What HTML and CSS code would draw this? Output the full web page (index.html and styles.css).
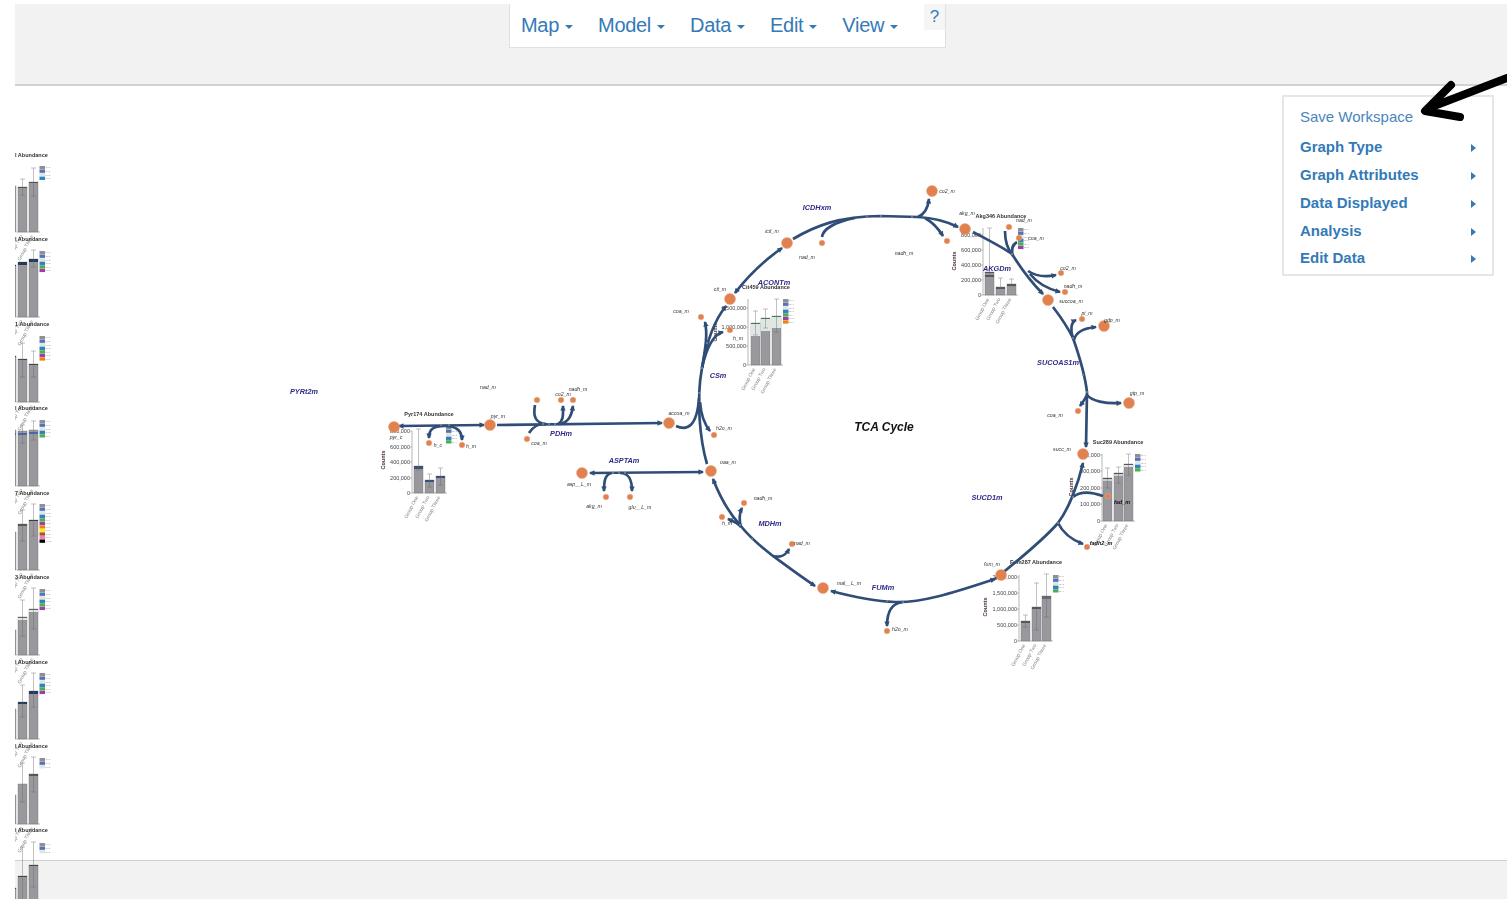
FILE: index.html
```html
<!DOCTYPE html>
<html lang="en">
<head>
    <meta charset="UTF-8">
    <title>TCA Cycle - Metabolic Map</title>
    <link rel="stylesheet" href="styles.css">
</head>
<body>
    <header class="topbar">
        <nav class="menu">
            <a class="menu-item">Map<span class="caret"></span></a>
            <a class="menu-item">Model<span class="caret"></span></a>
            <a class="menu-item">Data<span class="caret"></span></a>
            <a class="menu-item">Edit<span class="caret"></span></a>
            <a class="menu-item">View<span class="caret"></span></a>
            <a class="help">?</a>
        </nav>
    </header>

    <main class="stage">
        <ul class="side-panel">
            <li class="side-link">Save Workspace</li>
            <li class="side-item">Graph Type<span class="caret-right"></span></li>
            <li class="side-item">Graph Attributes<span class="caret-right"></span></li>
            <li class="side-item">Data Displayed<span class="caret-right"></span></li>
            <li class="side-item">Analysis<span class="caret-right"></span></li>
            <li class="side-item">Edit Data<span class="caret-right"></span></li>
        </ul>
    </main>

    <footer class="bottombar"></footer>

    <!-- The map is a free canvas, it runs over the header and footer -->
    <svg id="map" class="map" width="1507" height="899" viewBox="0 0 1507 899">
        <defs>
            <marker id="head" markerUnits="userSpaceOnUse" markerWidth="9" markerHeight="9" refX="6" refY="4.5" orient="auto">
                <path class="head" d="M1.5 1.8 L7 4.5 L1.5 7.2 Z"/>
            </marker>
            <marker id="headStart" markerUnits="userSpaceOnUse" markerWidth="9" markerHeight="9" refX="3" refY="4.5" orient="auto">
                <path class="head" d="M7.5 1.8 L2 4.5 L7.5 7.2 Z"/>
            </marker>
            <clipPath id="leftEdge"><rect x="15" y="0" width="100" height="899"/></clipPath>
        </defs>
        <g id="charts"></g>
        <g id="edges"></g>
        <g id="nodes"></g>
        <g id="labels"></g>
        <!-- Hand drawn arrow pointing at Save Workspace -->
        <path class="pointer" d="M1507 78 L1429 108 M1451 85 L1425 111 L1460 117"/>
    </svg>

    <script src="diagram.js"></script>
</body>
</html>
```

FILE: styles.css
```css
html, body {
    margin: 0;
    padding: 0;
}
body {
    position: relative;
    display: flex;
    flex-direction: column;
    box-sizing: border-box;
    width: 1507px;
    height: 899px;
    padding: 4px 0 0 15px;
    overflow: hidden;
    font-family: "Liberation Sans", Arial, sans-serif;
    background-color: #fff;
}
.topbar {
    height: 80px;
    flex: none;
    background-color: #f2f2f2;
    border-bottom: 2px solid #d2d2d2;
}
.menu {
    display: flex;
    box-sizing: border-box;
    width: 437px;
    height: 44px;
    margin-left: 494px;
    padding-left: 11px;
    background-color: #fff;
    border: 1px solid #e0e0e0;
    border-top: none;
}
.menu-item {
    display: flex;
    align-items: center;
    margin-right: 25px;
    font-size: 20px;
    letter-spacing: -0.3px;
    color: #337ab7;
}
.caret {
    margin-left: 6px;
    margin-top: 3px;
    border-top: 4px solid #337ab7;
    border-left: 4px solid transparent;
    border-right: 4px solid transparent;
}
.help {
    align-self: flex-start;
    margin-left: auto;
    width: 21px;
    height: 26px;
    font-size: 17px;
    line-height: 26px;
    text-align: center;
    color: #337ab7;
    background-color: #f5f5f5;
}
.stage {
    flex: 1;
    display: flex;
    justify-content: flex-end;
    align-items: flex-start;
    padding: 9px 13px 0 0;
}
.side-panel {
    box-sizing: border-box;
    width: 212px;
    height: 181px;
    margin: 0;
    padding: 5px 0 0 16px;
    list-style: none;
    background-color: #fff;
    border: 2px solid #e6e6e6;
}
.side-link, .side-item {
    display: flex;
    align-items: center;
    color: #337ab7;
}
.side-link {
    height: 28px;
    margin-bottom: 3px;
    font-size: 15px;
    color: #4a86bd;
}
.side-item {
    height: 27.75px;
    font-size: 15px;
    font-weight: bold;
}
.caret-right {
    margin-left: auto;
    margin-right: 16px;
    margin-top: 3px;
    border-left: 5px solid #337ab7;
    border-top: 4.5px solid transparent;
    border-bottom: 4.5px solid transparent;
}
.bottombar {
    height: 38px;
    flex: none;
    background-color: #f2f2f2;
    border-top: 1px solid #cfcfcf;
}
.map {
    position: absolute;
    top: 0;
    left: 0;
    pointer-events: none;
    filter: blur(0.3px);
}
.map text {
    font-family: "Liberation Sans", Arial, sans-serif;
}
.edge {
    fill: none;
    stroke: #2f4d76;
    stroke-width: 2.7;
}
.head {
    fill: #2f4d76;
}
.node {
    fill: #e0814f;
    stroke: #e9a27c;
    stroke-width: 0.5;
}
.joint {
    fill: #7f8a99;
}
.metabolite {
    font-size: 5.2px;
    font-style: italic;
    text-anchor: middle;
    fill: #333;
}
.metabolite-dark {
    font-size: 5.5px;
    font-style: italic;
    font-weight: bold;
    text-anchor: middle;
    fill: #111;
}
.reaction {
    font-size: 7.3px;
    font-style: italic;
    font-weight: bold;
    text-anchor: middle;
    fill: #2e2a86;
}
.map-title {
    font-size: 12px;
    font-style: italic;
    font-weight: bold;
    text-anchor: middle;
    fill: #111;
}
.pointer {
    fill: none;
    stroke: #000;
    stroke-width: 8;
    stroke-linecap: round;
    stroke-linejoin: round;
}
.chart-title {
    font-size: 5.5px;
    font-weight: bold;
    text-anchor: middle;
    fill: #333;
}
.chart-title-left {
    font-size: 5.5px;
    font-weight: bold;
    fill: #333;
}
.tick-label {
    font-size: 5.5px;
    text-anchor: end;
    fill: #444;
}
.counts {
    font-size: 5.5px;
    font-weight: bold;
    text-anchor: middle;
    fill: #4a3040;
}
.group-label {
    font-size: 5px;
    text-anchor: end;
    fill: #888;
}
.legend-label {
    font-size: 2.5px;
    fill: #888;
}
.axis {
    fill: none;
    stroke: #888;
    stroke-width: 0.6;
}
.bar {
    fill: #99989d;
    stroke: #77767b;
    stroke-width: 0.4;
}
.whisker {
    fill: none;
    stroke: #666;
    stroke-opacity: 0.5;
    stroke-width: 0.8;
}
```

FILE: diagram.js
```js
const NS = 'http://www.w3.org/2000/svg';

function add(parent, tag, attrs, text) {
    const el = document.createElementNS(NS, tag);
    for (const key in attrs) {
        el.setAttribute(key, attrs[key]);
    }
    if (text !== undefined) {
        el.textContent = text;
    }
    parent.appendChild(el);
    return el;
}

// path, arrow at end, arrow at start
const edges = [
    // PYRt2m
    ['M399 426 L484 425', 1, 1],
    ['M445 426 C432 426 429 430 429 438', 1],
    ['M445 426 C458 426 462 432 462 440', 1],
    // PDHm
    ['M497 425 L662 423', 1],
    ['M535 405 C533 416 535 423 546 424', 0],
    ['M529 433 C532 428 536 424 546 424', 0],
    ['M558 424 C564 421 563 413 563 406', 1],
    ['M560 424 C570 422 572 413 573 406', 1],
    // CSm
    ['M676 426 C687 431 697 427 699 398', 0],
    ['M707 464 C700 440 696 400 702 368 C706 345 713 322 726 306', 1],
    ['M702 368 C705 350 708 335 705 322', 1],
    ['M702 368 C706 350 712 335 723 332', 1],
    ['M700 402 C701 415 705 425 710 431', 1],
    // ACONTm
    ['M782 248 C765 260 748 276 735 293', 1, 1],
    // ICDHxm
    ['M793 239 C815 226 840 216 880 216 L918 217', 0],
    ['M918 217 C925 214 928 208 929 199', 1],
    ['M918 217 C935 218 948 222 958 227', 1],
    ['M925 218 C932 222 938 228 943 236', 1],
    ['M822 237 C823 229 835 222 855 218', 0],
    // AKGDm
    ['M973 232 C990 241 1002 247 1012 254 C1022 270 1032 283 1043 294', 1],
    ['M1005 231 C1005 240 1007 248 1012 254', 0],
    ['M1017 242 C1012 245 1011 250 1013 256', 0],
    ['M1028 271 C1037 277 1047 277 1056 275', 1],
    ['M1030 274 C1038 284 1048 289 1060 292', 1],
    // SUCOAS1m
    ['M1053 307 C1063 320 1069 330 1073 338 C1080 358 1085 375 1087 392 L1086 447', 1],
    ['M1073 338 C1070 330 1071 322 1076 320', 1],
    ['M1074 340 C1076 331 1085 328 1096 327', 1],
    ['M1087 395 C1092 401 1105 404 1121 403', 1],
    ['M1087 395 C1085 399 1083 402 1080 406', 1],
    // SUCD1m
    ['M995 579 C1025 555 1045 538 1058 523 C1068 510 1078 485 1083 463', 1, 1],
    ['M1073 497 C1080 491 1092 492 1103 496', 0],
    ['M1058 523 C1063 533 1072 540 1083 544', 1],
    // FUMm
    ['M831 591 C850 596 870 601 895 602 C920 603 950 594 995 579', 1, 1],
    ['M903 602 C892 603 887 612 887 626', 1],
    // MDHm
    ['M713 479 C720 497 730 514 740 525 C750 538 760 546 773 556 C788 567 800 576 815 586', 1, 1],
    ['M741 527 C739 520 739 514 742 508', 1],
    ['M741 527 C738 523 733 521 728 519', 1],
    ['M773 556 C780 558 786 555 789 549', 1],
    // ASPTAm
    ['M590 473 L703 472', 1, 1],
    ['M612 473 C605 474 604 481 604 491', 1],
    ['M620 473 C630 473 632 481 632 491', 1]
];

const joints = [
    [441, 425], [449, 425], [543, 424], [549, 424], [555, 424], [699, 393], [702, 368],
    [707, 343], [867, 216], [881, 216], [912, 217], [1012, 254], [1073, 338], [1083, 375],
    [1087, 392], [1058, 523], [1073, 497], [887, 601], [903, 602], [740, 525], [752, 539],
    [613, 473], [619, 473], [625, 473]
];

// x, y, radius
const nodes = [
    [394, 427, 5.5], [490, 425, 5.5], [669, 423, 5.5], [711, 471, 5.5], [582, 473, 5.5],
    [787, 243, 5.5], [730, 299, 5.5], [932, 191, 5.5], [965, 229, 5.5], [1048, 300, 5.5],
    [1104, 326, 5.5], [1129, 403, 5.5], [1083, 454, 5.5], [1001, 575, 5.5], [823, 588, 5.5],
    [429, 443, 2.8], [462, 445, 2.8], [537, 400, 2.8], [561, 400, 2.8], [573, 400, 2.8],
    [527, 439, 2.8], [606, 497, 2.8], [630, 497, 2.8], [722, 517, 2.8], [714, 435, 2.8],
    [822, 243, 2.8], [701, 317, 2.8], [730, 330, 2.8], [947, 241, 2.8], [1009, 227, 2.8],
    [1019, 238, 2.8], [1061, 273, 2.8], [1065, 292, 2.8], [1082, 319, 2.8], [1078, 411, 2.8],
    [1108, 496, 2.8], [1087, 547, 2.8], [744, 503, 2.8], [792, 544, 2.8], [887, 631, 2.8]
];

const metabolites = [
    ['nad_m', 488, 389], ['co2_m', 563, 396], ['nadh_m', 578, 391], ['pyr_m', 498, 418],
    ['pyr_c', 396, 439], ['h_c', 438, 447], ['h_m', 471, 448], ['coa_m', 539, 445],
    ['accoa_m', 679, 415], ['h2o_m', 724, 430], ['oaa_m', 728, 464], ['asp__L_m', 579, 486],
    ['akg_m', 594, 508], ['glu__L_m', 640, 509], ['h_m', 727, 525], ['icit_m', 772, 233],
    ['nad_m', 807, 259], ['cit_m', 720, 291], ['coa_m', 681, 313], ['h_m', 738, 340],
    ['co2_m', 947, 193], ['akg_m', 967, 215], ['nadh_m', 904, 255], ['nad_m', 1024, 222],
    ['coa_m', 1036, 240], ['co2_m', 1068, 270], ['nadh_m', 1073, 288], ['succoa_m', 1071, 303],
    ['pi_m', 1087, 315], ['gdp_m', 1112, 322], ['gtp_m', 1137, 395], ['coa_m', 1055, 417],
    ['succ_m', 1062, 451], ['fum_m', 992, 566], ['nadh_m', 763, 500], ['nad_m', 802, 545],
    ['mal__L_m', 849, 585], ['h2o_m', 900, 631]
];

const darkMetabolites = [['fad_m', 1122, 504], ['fadh2_m', 1101, 545]];

const reactions = [
    ['PYRt2m', 304, 394], ['ACONTm', 774, 285], ['ICDHxm', 817, 210], ['CSm', 718, 378],
    ['PDHm', 561, 436], ['ASPTAm', 624, 463], ['AKGDm', 997, 271], ['SUCOAS1m', 1058, 365],
    ['SUCD1m', 987, 500], ['MDHm', 770, 526], ['FUMm', 883, 590]
];

const legendColors = ['#8f8f93', '#5472b8', '#dfe6e2', '#2f80bd', '#4bae4f', '#9a40a8',
    '#f07f12', '#ffe81a', '#a5552a', '#f57ac0', '#000'];
const groupNames = ['Group One', 'Group Two', 'Group Three'];

// top: bar top, band: [y, height, colour] stacked pieces, err: [top, bottom]
const charts = [
    {
        title: 'Pyr174 Abundance', titleX: 429, titleY: 416, axis: 412, base: 493, top: 431, counts: [385, 460],
        ticks: [['800,000', 431], ['600,000', 447], ['400,000', 462], ['200,000', 478], ['0', 493]],
        barX: [414, 425, 436], legend: [446, 426, 5],
        bars: [
            { top: 466, band: [466, 3, '#3c4f78'], err: [429, 470] },
            { top: 480, band: [480, 2, '#3c4f78'], err: [474, 487] },
            { top: 476, band: [476, 2, '#3c4f78'], err: [468, 485] }
        ]
    },
    {
        title: 'Cit459 Abundance', titleX: 766, titleY: 289, axis: 748, base: 365, top: 299, counts: [717, 332],
        ticks: [['1,500,000', 308], ['1,000,000', 327], ['500,000', 346], ['0', 365]],
        barX: [751, 761, 772], legend: [783, 299, 7],
        bars: [
            { top: 323, band: [323, 13, '#dfe7e3'], line: '#2f5b3a', err: [311, 335] },
            { top: 318, band: [318, 13, '#dfe7e3'], line: '#2f5b3a', err: [309, 328] },
            { top: 316, band: [316, 12, '#dfe7e3'], line: '#2f5b3a', err: [299, 332] }
        ]
    },
    {
        title: 'Akg346 Abundance', titleX: 1001, titleY: 218, axis: 983, base: 295, top: 228, counts: [956, 261],
        ticks: [['800,000', 235], ['600,000', 250], ['400,000', 265], ['200,000', 280], ['0', 295]],
        barX: [985, 996, 1007], legend: [1018, 228, 6],
        bars: [
            { top: 272, band: [275, 2, '#55555a'], line: '#444', err: [228, 276] },
            { top: 287, band: [287, 2, '#55555a'], err: [278, 288] },
            { top: 284, band: [284, 2, '#55555a'], err: [279, 286] }
        ]
    },
    {
        title: 'Suc289 Abundance', titleX: 1118, titleY: 444, axis: 1102, base: 521, top: 454, counts: [1073, 487],
        ticks: [['400,000', 455], ['300,000', 471], ['200,000', 488], ['100,000', 504], ['0', 521]],
        barX: [1103, 1114, 1124], legend: [1135, 454, 5],
        bars: [
            { top: 478, band: [478, 3, '#c9cfcc'], line: '#333', err: [468, 488] },
            { top: 473, band: [473, 3, '#c9cfcc'], line: '#333', err: [467, 483] },
            { top: 464, band: [464, 3, '#dfe7e3'], line: '#333', err: [454, 475] }
        ]
    },
    {
        title: 'Fum287 Abundance', titleX: 1036, titleY: 564, axis: 1019, base: 641, top: 575, counts: [987, 607],
        ticks: [['2,000,000', 577], ['1,500,000', 593], ['1,000,000', 609], ['500,000', 625], ['0', 641]],
        barX: [1021, 1032, 1042], legend: [1053, 575, 5],
        bars: [
            { top: 621, band: [621, 2, '#55555a'], err: [615, 627] },
            { top: 607, band: [607, 2, '#55555a'], err: [583, 630] },
            { top: 596, band: [596, 3, '#6a6a70'], err: [574, 617] }
        ]
    }
];

// The column of charts cut off by the left edge of the canvas
const leftCharts = [
    { title: 'l Abundance', titleY: 157, base: 232, legend: 4, bars: [
        { top: 186 },
        { top: 187, line: '#444', err: [179, 195] },
        { top: 182, line: '#444', err: [168, 196] } ] },
    { title: 'l Abundance', titleY: 241, base: 317, legend: 6, bars: [
        { top: 265, line: '#223' },
        { top: 262, band: [262, 3, '#233a5e'] },
        { top: 259, band: [259, 3, '#233a5e'], err: [250, 267] } ] },
    { title: '1 Abundance', titleY: 326, base: 402, legend: 7, bars: [
        { top: 356, line: '#333' },
        { top: 359, line: '#333', err: [343, 377] },
        { top: 364, line: '#333', err: [351, 377] } ] },
    { title: 'l Abundance', titleY: 410, base: 486, legend: 5, bars: [
        { top: 430, band: [433, 2, '#4468a8'] },
        { top: 431, band: [433, 2, '#4468a8'], err: [425, 443] },
        { top: 430, band: [432, 2, '#4468a8'], err: [421, 440] } ] },
    { title: '7 Abundance', titleY: 495, base: 570, legend: 11, bars: [
        { top: 532 },
        { top: 524, band: [524, 2, '#55555a'], err: [510, 541] },
        { top: 520, line: '#222', err: [504, 536] } ] },
    { title: '3 Abundance', titleY: 579, base: 655, legend: 6, bars: [
        { top: 630 },
        { top: 617, band: [617, 3, '#dfe7e3'], line: '#444', err: [600, 636] },
        { top: 609, band: [609, 3, '#dfe7e3'], line: '#444', err: [588, 629] } ] },
    { title: 'l Abundance', titleY: 664, base: 739, legend: 6, bars: [
        { top: 709 },
        { top: 702, band: [702, 2, '#233a5e'], err: [685, 717] },
        { top: 691, band: [691, 3, '#233a5e'], err: [673, 707] } ] },
    { title: 'l Abundance', titleY: 748, base: 824, legend: 3, bars: [
        { top: 795 },
        { top: 784, err: [763, 802] },
        { top: 774, band: [774, 2, '#55555a'], err: [757, 792] } ] },
    { title: 'l Abundance', titleY: 832, base: 909, legend: 3, bars: [
        { top: 888, line: '#333' },
        { top: 876, line: '#333', err: [847, 905] },
        { top: 865, line: '#333', err: [842, 887] } ] }
];

function drawBars(g, barX, base, bars, width, firstLabel) {
    bars.forEach((bar, i) => {
        const x = barX[i];
        add(g, 'rect', { class: 'bar', x: x, y: bar.top, width: width, height: base - bar.top });
        if (bar.band) {
            add(g, 'rect', { x: x, y: bar.band[0], width: width, height: bar.band[1], fill: bar.band[2] });
        }
        if (bar.line) {
            add(g, 'rect', { x: x, y: bar.top, width: width, height: 0.8, fill: bar.line });
        }
        if (bar.err) {
            const mid = x + width / 2;
            const d = `M${mid} ${bar.err[0]} V${bar.err[1]} M${mid - 2.5} ${bar.err[0]} H${mid + 2.5} M${mid - 2.5} ${bar.err[1]} H${mid + 2.5}`;
            add(g, 'path', { class: 'whisker', d: d });
        }
        // Labels that would fall off the page are left out
        if (i >= firstLabel && base < 890) {
            const lx = x + width / 2;
            const ly = base + 4;
            add(g, 'text', { class: 'group-label', x: lx, y: ly, transform: `rotate(-62 ${lx} ${ly})` }, groupNames[i]);
        }
    });
}

function drawLegend(g, x, y, count) {
    const step = 3.55;
    for (let i = 0; i < count; i++) {
        add(g, 'rect', { x: x, y: y + i * step, width: 5.5, height: 3.3, fill: legendColors[i] });
        add(g, 'text', { class: 'legend-label', x: x + 6, y: y + i * step + 2.4 }, `m+${i}`);
    }
}

const chartLayer = document.getElementById('charts');

leftCharts.forEach(chart => {
    const g = add(chartLayer, 'g', { 'clip-path': 'url(#leftEdge)' });
    add(g, 'text', { class: 'chart-title-left', x: 15, y: chart.titleY }, chart.title);
    drawBars(g, [7, 18, 29], chart.base, chart.bars, 9, 1);
    add(g, 'path', { class: 'axis', d: `M16.5 ${chart.base} H40` });
    drawLegend(g, 39.5, chart.base - 66, chart.legend);
});

charts.forEach(chart => {
    const g = add(chartLayer, 'g', {});
    add(g, 'text', { class: 'chart-title', x: chart.titleX, y: chart.titleY }, chart.title);
    drawBars(g, chart.barX, chart.base, chart.bars, 9, 0);
    let axis = `M${chart.axis} ${chart.top} V${chart.base} H${chart.barX[2] + 11}`;
    chart.ticks.forEach(tick => {
        axis += ` M${chart.axis - 2} ${tick[1]} H${chart.axis}`;
        add(g, 'text', { class: 'tick-label', x: chart.axis - 2, y: tick[1] + 1.7 }, tick[0]);
    });
    add(g, 'path', { class: 'axis', d: axis });
    const cx = chart.counts[0];
    const cy = chart.counts[1];
    add(g, 'text', { class: 'counts', x: cx, y: cy, transform: `rotate(-90 ${cx} ${cy})` }, 'Counts');
    drawLegend(g, chart.legend[0], chart.legend[1], chart.legend[2]);
});

const edgeLayer = document.getElementById('edges');
edges.forEach(edge => {
    const attrs = { class: 'edge', d: edge[0] };
    if (edge[1]) attrs['marker-end'] = 'url(#head)';
    if (edge[2]) attrs['marker-start'] = 'url(#headStart)';
    add(edgeLayer, 'path', attrs);
});
joints.forEach(j => add(edgeLayer, 'circle', { class: 'joint', cx: j[0], cy: j[1], r: 1 }));

const nodeLayer = document.getElementById('nodes');
nodes.forEach(n => add(nodeLayer, 'circle', { class: 'node', cx: n[0], cy: n[1], r: n[2] }));

const labelLayer = document.getElementById('labels');
metabolites.forEach(m => add(labelLayer, 'text', { class: 'metabolite', x: m[1], y: m[2] }, m[0]));
darkMetabolites.forEach(m => add(labelLayer, 'text', { class: 'metabolite-dark', x: m[1], y: m[2] }, m[0]));
reactions.forEach(r => add(labelLayer, 'text', { class: 'reaction', x: r[1], y: r[2] }, r[0]));
add(labelLayer, 'text', { class: 'map-title', x: 884, y: 431 }, 'TCA Cycle');
```
